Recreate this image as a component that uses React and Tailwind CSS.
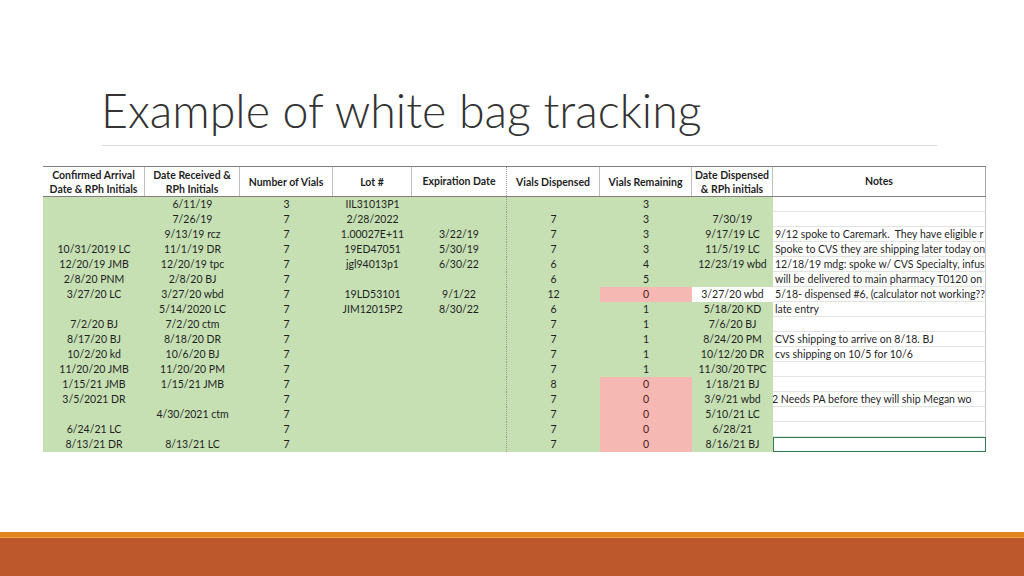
import React from "react";

const rows = [
  ["", "6/11/19", "3", "IIL31013P1", "", "", "3", "", ""],
  ["", "7/26/19", "7", "2/28/2022", "", "7", "3", "7/30/19", ""],
  ["", "9/13/19 rcz", "7", "1.00027E+11", "3/22/19", "7", "3", "9/17/19 LC", "9/12 spoke to Caremark.  They have eligible r"],
  ["10/31/2019 LC", "11/1/19 DR", "7", "19ED47051", "5/30/19", "7", "3", "11/5/19 LC", "Spoke to CVS they are shipping later today on"],
  ["12/20/19 JMB", "12/20/19 tpc", "7", "jgl94013p1", "6/30/22", "6", "4", "12/23/19 wbd", "12/18/19 mdg: spoke w/ CVS Specialty, infusi"],
  ["2/8/20 PNM", "2/8/20 BJ", "7", "", "", "6", "5", "", "will be delivered to main pharmacy T0120 on"],
  ["3/27/20 LC", "3/27/20 wbd", "7", "19LD53101", "9/1/22", "12", "0", "3/27/20 wbd", "5/18- dispensed #6, (calculator not working??"],
  ["", "5/14/2020 LC", "7", "JIM12015P2", "8/30/22", "6", "1", "5/18/20 KD", "late entry"],
  ["7/2/20 BJ", "7/2/20 ctm", "7", "", "", "7", "1", "7/6/20 BJ", ""],
  ["8/17/20 BJ", "8/18/20 DR", "7", "", "", "7", "1", "8/24/20 PM", "CVS shipping to arrive on 8/18. BJ"],
  ["10/2/20 kd", "10/6/20 BJ", "7", "", "", "7", "1", "10/12/20 DR", "cvs shipping on 10/5 for 10/6"],
  ["11/20/20 JMB", "11/20/20 PM", "7", "", "", "7", "1", "11/30/20 TPC", ""],
  ["1/15/21 JMB", "1/15/21 JMB", "7", "", "", "8", "0", "1/18/21 BJ", ""],
  ["3/5/2021 DR", "", "7", "", "", "7", "0", "3/9/21 wbd", "2 Needs PA before they will ship Megan wo"],
  ["", "4/30/2021 ctm", "7", "", "", "7", "0", "5/10/21 LC", ""],
  ["6/24/21 LC", "", "7", "", "", "7", "0", "6/28/21", ""],
  ["8/13/21 DR", "8/13/21 LC", "7", "", "", "7", "0", "8/16/21 BJ", ""],
];

const grid =
  "grid grid-cols-[102px_95px_93px_79px_95px_93px_92px_81px_213px]";

function Header() {
  const th =
    "flex items-center justify-center text-center font-bold leading-[14px] border-r border-[#bfbfbf]";
  return (
    <div className={`${grid} h-[31px] border-t border-b border-[#808080] bg-white`}>
      <div className={th}>
        Confirmed Arrival
        <br />
        Date &amp; RPh Initials
      </div>
      <div className={th}>
        Date Received &amp;
        <br />
        RPh Initials
      </div>
      <div className={th}>Number of Vials</div>
      <div className={th}>Lot #</div>
      <div className="flex items-center justify-center text-center font-bold border-r border-dotted border-[#9a9a9a]">
        Expiration Date
      </div>
      <div className={th}>Vials Dispensed</div>
      <div className={th}>Vials Remaining</div>
      <div className={th}>
        Date Dispensed
        <br />
        &amp; RPh initials
      </div>
      <div className="flex items-center justify-center font-bold border-r border-[#a6a6a6]">
        Notes
      </div>
    </div>
  );
}

function Row({ r, i, last }) {
  const green = "bg-[#c6e0b4]";
  const pink = "bg-[#f6b8b3]";
  const c = "flex items-center justify-center whitespace-nowrap h-[15px]";
  const remPink = r[6] === "0";
  const ddWhite = i === 6;
  return (
    <div className={`${grid} h-[15px]`}>
      <div className={`${c} ${green}`}>{r[0]}</div>
      <div className={`${c} ${green}`}>{r[1]}</div>
      <div className={`${c} ${green}`}>{r[2]}</div>
      <div className={`${c} ${green}`}>{r[3]}</div>
      <div className={`${c} ${green} border-r border-dotted border-[#9a9a9a]`}>{r[4]}</div>
      <div className={`${c} ${green}`}>{r[5]}</div>
      <div className={`${c} ${remPink ? pink + " text-[#4a1a1a]" : green}`}>{r[6]}</div>
      <div className={`${c} ${ddWhite ? "bg-white" : green}`}>{r[7]}</div>
      {last ? (
        <div className="h-[15px] bg-white border-[1.5px] border-[#2e7d4f]"></div>
      ) : (
        <div className="h-[15px] bg-white border-b border-r border-[#e3e3e3] border-r-[#c8c8c8] overflow-hidden whitespace-pre leading-[14px] text-[10.5px]">
          <span className={i === 13 ? "-ml-[1px] inline-block" : "pl-[2px] inline-block"}>{r[8]}</span>
        </div>
      )}
    </div>
  );
}

export default function App() {
  return (
    <div className="w-[1024px] h-[576px] bg-white flex flex-col overflow-hidden">
      <div className="pl-[101px] pt-[84px]">
        <div
          className="text-[46.5px] leading-[52px] font-light text-[#333333]"
          style={{ fontFamily: "Lato, 'Open Sans', sans-serif" }}
        >
          Example of white bag tracking
        </div>
      </div>
      <div className="ml-[102px] mt-[9px] w-[835px] h-[1px] bg-[#d9d9d9]"></div>
      <div
        className="ml-[43px] mt-[20px] w-[943px] text-[10.5px] text-[#1f1f1f]"
        style={{ fontFamily: "Lato, 'Noto Sans', sans-serif" }}
      >
        <Header />
        {rows.map((r, i) => (
          <Row key={i} r={r} i={i} last={i === rows.length - 1} />
        ))}
      </div>
      <div className="flex-1"></div>
      <div className="h-[5px] bg-[#e2841c]"></div>
      <div className="h-[1px] bg-[#eca24a]"></div>
      <div className="h-[38px] bg-[#bd582c]"></div>
    </div>
  );
}
